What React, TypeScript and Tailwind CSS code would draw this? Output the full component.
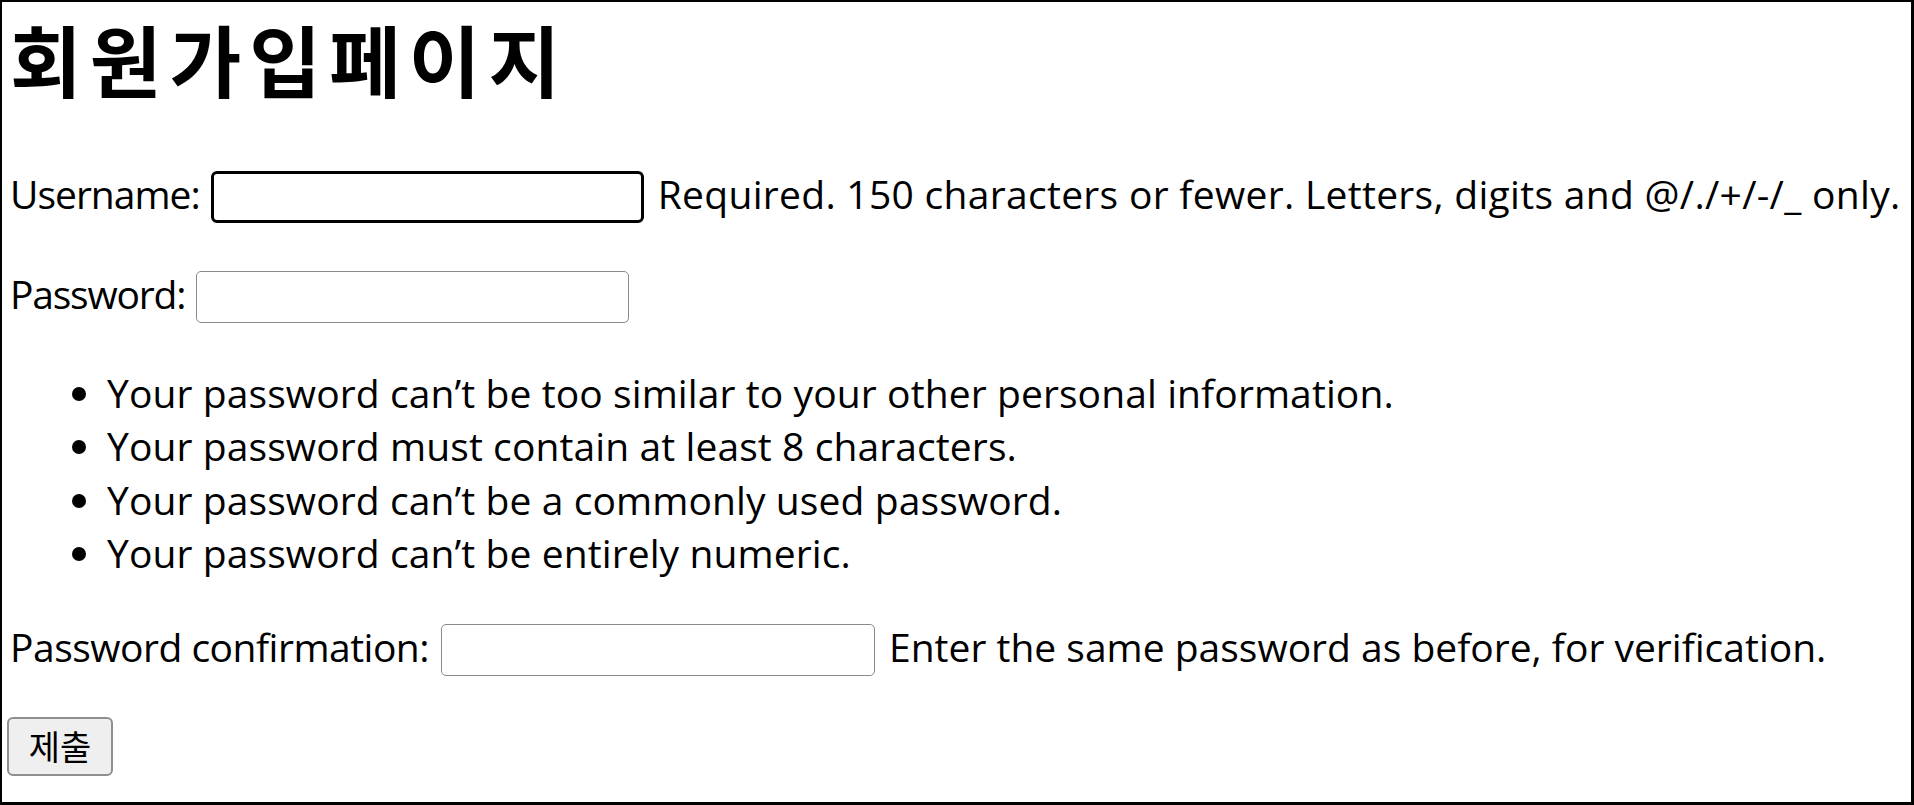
import React from "react";

const latin = "font-['Open_Sans','Noto_Sans_CJK_KR',sans-serif]";

export default function App() {
  return (
    <div className="w-[1914px] h-[805px] box-border border-l-2 border-t-2 border-r-[3px] border-b-[3px] border-black bg-white text-black overflow-hidden">
      <div className={`flex flex-col pl-[8px] ${latin} text-[39px]`}>
        <h1 className="h-[112px] flex items-center font-['Noto_Sans_CJK_KR',sans-serif] font-bold text-[78px] leading-none tracking-[8px]">
          회원가입페이지
        </h1>
        <div className="mt-[57px] h-[52px] flex items-center gap-[11px] leading-none">
          <span className="mb-[8px] tracking-[-1px]">Username:</span>
          <div className="w-[433px] h-[52px] border-[3px] border-black rounded-[6px] bg-white box-border" />
          <span className="mb-[8px] ml-[3px] tracking-[0.3px]">Required. 150 characters or fewer. Letters, digits and @/./+/-/_ only.</span>
        </div>
        <div className="mt-[48px] h-[52px] flex items-center gap-[11px] leading-none">
          <span className="mb-[8px] tracking-[-1.2px]">Password:</span>
          <div className="w-[433px] h-[52px] border-[1.5px] border-[#8a8a8a] rounded-[5px] bg-white box-border" />
        </div>
        <ul className="mt-[43px] list-disc pl-[97px] leading-[53.3px] tracking-[0.1px]">
          <li>Your password can’t be too similar to your other personal information.</li>
          <li>Your password must contain at least 8 characters.</li>
          <li>Your password can’t be a commonly used password.</li>
          <li>Your password can’t be entirely numeric.</li>
        </ul>
        <div className="mt-[45px] h-[52px] flex items-center gap-[12px] leading-none">
          <span className="mb-[8px] tracking-[-0.5px]">Password confirmation:</span>
          <div className="w-[434px] h-[52px] border-[1.5px] border-[#8a8a8a] rounded-[5px] bg-white box-border" />
          <span className="mb-[8px] ml-[2px]">Enter the same password as before, for verification.</span>
        </div>
        <div className="mt-[40px] -ml-[3px]">
          <button className="w-[106px] h-[59px] bg-[#efefef] border-2 border-[#8f8f8f] rounded-[6px] font-['Noto_Sans_CJK_KR',sans-serif] text-[34px] leading-none text-black">
            제출
          </button>
        </div>
      </div>
    </div>
  );
}
